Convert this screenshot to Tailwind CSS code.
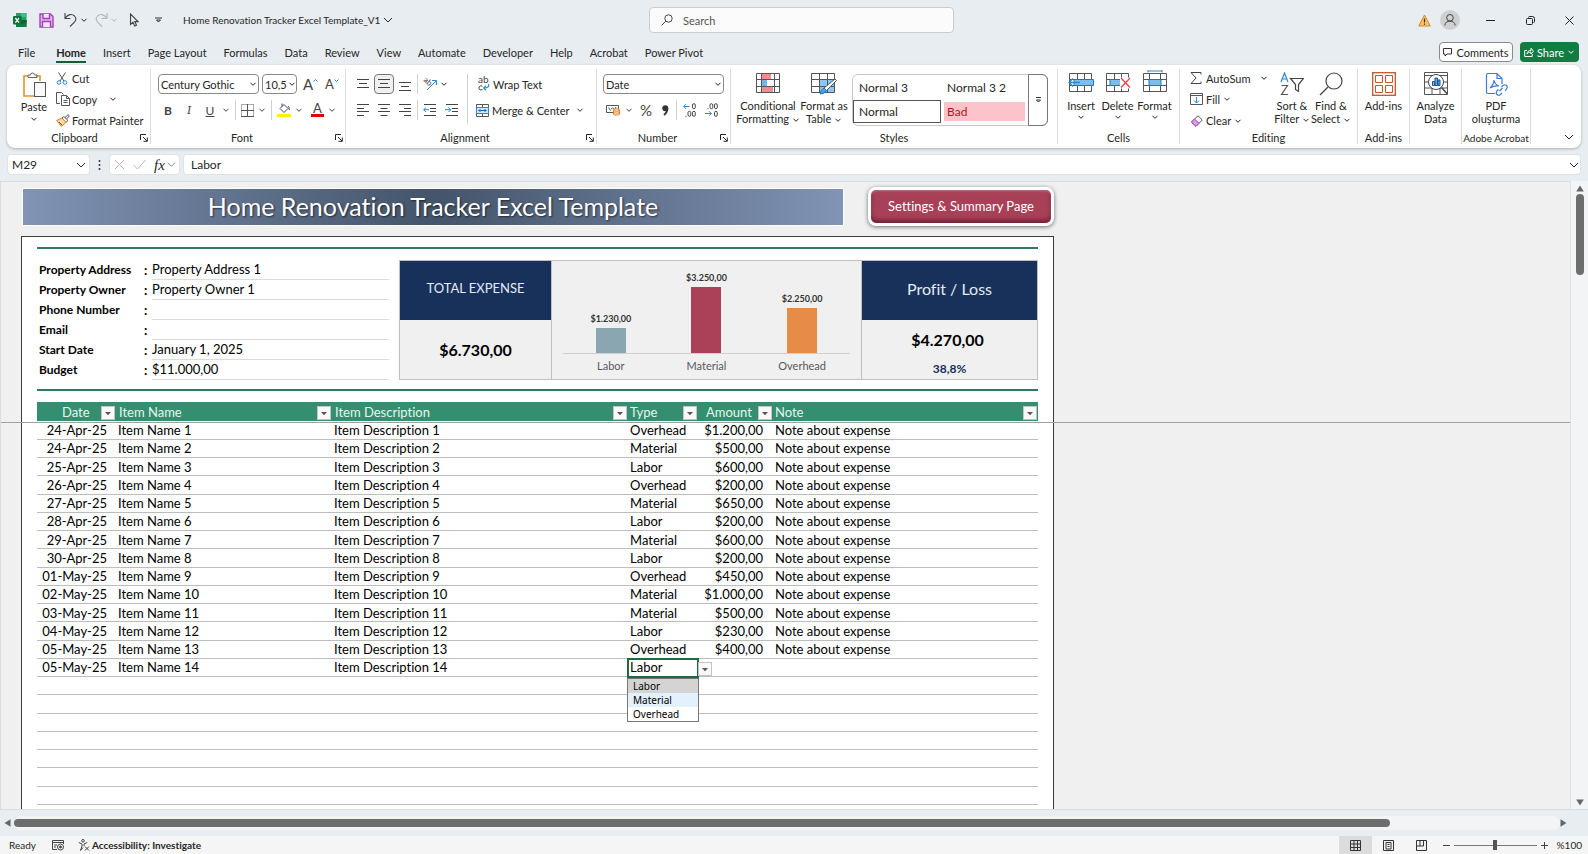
<!DOCTYPE html>
<html lang="en">
<head>
<meta charset="utf-8">
<title>Home Renovation Tracker Excel Template_V1</title>
<script src="https://cdn.jsdelivr.net/npm/@tailwindcss/browser@4"></script>
</head>
<body class="h-screen overflow-hidden flex flex-col bg-[#e8edf1] text-[#262626] text-[11px] leading-[13px] font-['Segoe_UI','Lato',sans-serif] [font-variant-ligatures:none]">
<svg class="hidden" aria-hidden="true">
  <symbol id="chev" viewBox="0 0 8 8"><path d="M1.500 2.800 4 5.300 6.500 2.800" fill="none" stroke="currentColor" stroke-width="1"/></symbol>
  <symbol id="chevl" viewBox="0 0 10 10"><path d="M1 3 5 7 9 3" fill="none" stroke="currentColor" stroke-width="1"/></symbol>
  <symbol id="launch" viewBox="0 0 8 8"><path d="M.5 6V.5H6M3 3l4 4M7.300 3.500V7.300H3.500" fill="none" stroke="currentColor" stroke-width="1"/></symbol>
  <symbol id="tri" viewBox="0 0 14 14"><rect x=".5" y=".5" width="13" height="13" fill="#f8f8f8" stroke="#c4c4c4"/><path d="M4 6h6L7 9.200z" fill="#555"/></symbol>
</svg>

<!-- Title bar -->
<header class="h-10 shrink-0 flex items-center pl-3 pr-3 relative">
  <svg class="w-4 h-4" viewBox="0 0 16 16"><path d="M4 1h10.500v14H4z" fill="#21a366"/><path d="M9 1h5.500v4H9z" fill="#33c481"/><path d="M4 8h10.500v7H4z" fill="#107c41"/><path d="M9 8h5.500v3.500H9z" fill="#185c37"/><rect x="1" y="4" width="8.500" height="8.500" rx="1" fill="#0f703b"/><path d="m3.400 6 3.600 4.600M7 6l-3.600 4.600" stroke="#fff" stroke-width="1.300"/></svg>
  <button aria-label="Save" class="ml-[11px]"><svg class="w-[15px] h-[15px]" viewBox="0 0 15 15" fill="none" stroke="#a33fb8" stroke-width="1.400"><path d="M1 1h10.500L14 3.500V14H1z" fill="#e4b5ee"/><path d="M4 1v4.500h6.500V1M3.500 14V8.500h8V14" fill="#f6e6fa"/></svg></button>
  <button aria-label="Undo" class="ml-[9px]"><svg class="w-[15px] h-4" viewBox="0 0 15 16" fill="none" stroke="#444" stroke-width="1.100"><path d="M2 1v5.500h5.500M2 6.300C5 2 9 1.500 11.500 4c2 2.300 1.500 4.600-.3 6.300L7 14.500"/></svg></button>
  <svg class="w-2 h-2 ml-[2px]"><use href="#chev"/></svg>
  <button aria-label="Redo" class="ml-[6px] text-[#b4b8bb]"><svg class="w-[15px] h-4" viewBox="0 0 15 16" fill="none" stroke="currentColor" stroke-width="1.100"><path d="M13 1v5.500H7.500M13 6.300C10 2 6 1.500 3.500 4c-2 2.300-1.500 4.600.3 6.300L8 14.500"/></svg></button>
  <svg class="w-2 h-2 ml-px text-[#b4b8bb]"><use href="#chev"/></svg>
  <svg class="w-[10px] h-[14px] ml-[11px]" viewBox="0 0 10 14"><path d="M1.500 1v10.500L4 9.200l1.700 3.900 1.800-.8-1.700-3.700H9z" fill="none" stroke="#444" stroke-width="1.100"/></svg>
  <svg class="w-[7px] h-[7px] ml-4" viewBox="0 0 7 7" fill="none" stroke="#333"><path d="M0 1h7M1.500 3h4L3.500 5z"/></svg>
  <h1 class="ml-[21px] text-[10px] whitespace-nowrap">Home Renovation Tracker Excel Template_V1</h1>
  <svg class="w-[10px] h-[10px] ml-[3px]"><use href="#chevl"/></svg>
  <label class="absolute left-1/2 -translate-x-[145px] top-[7px] w-[305px] h-[26px] bg-[#fbfbfc] border border-[#c9cdd0] rounded flex items-center pl-[11px] gap-[10px]">
    <svg class="w-3 h-3" viewBox="0 0 12 12" fill="none" stroke="#444"><circle cx="7.500" cy="4.500" r="3.700"/><path d="M4.800 7.200.6 11.400"/></svg>
    <input type="text" placeholder="Search" aria-label="Search" class="w-56 outline-none text-[11px] placeholder:text-[#555]">
  </label>
  <div class="ml-auto flex items-center">
    <svg class="w-[13px] h-[13px]" viewBox="0 0 13 13"><path d="M6.500 1 12.300 12H.7z" fill="#fbc35f" stroke="#d9862a"/><path d="M6.500 4.500v4M6.500 9.500v1.300" stroke="#333" stroke-width="1.200"/></svg>
    <button aria-label="Account" class="ml-[9px]"><svg class="w-5 h-5" viewBox="0 0 20 20" fill="none" stroke="#444"><circle cx="10" cy="10" r="10" fill="#cdcfd1" stroke="none"/><circle cx="10" cy="7.800" r="3.300"/><path d="M4.800 15.500c.4-3 2.300-4.400 5.200-4.400s4.800 1.400 5.200 4.400"/></svg></button>
    <button aria-label="Minimize" class="ml-[26px]"><svg class="w-[9px] h-[9px]" viewBox="0 0 9 9" stroke="#222"><path d="M0 4.500h9"/></svg></button>
    <button aria-label="Restore" class="ml-[31px]"><svg class="w-[9px] h-[9px]" viewBox="0 0 9 9" fill="none" stroke="#222"><rect x=".5" y="2.500" width="6" height="6" rx="1"/><path d="M2.500 1.500q0-1 1-1h3q2 0 2 2v3q0 1-1 1"/></svg></button>
    <button aria-label="Close" class="ml-[30px] mr-[2px]"><svg class="w-[9px] h-[9px]" viewBox="0 0 9 9" stroke="#222"><path d="m.5.500 8 8M8.500.5l-8 8"/></svg></button>
  </div>
</header>

<!-- Tabs -->
<nav class="h-[25px] shrink-0 flex items-start pt-1 pl-[18px] pr-[9px] text-[11px] leading-[17px]">
  <div class="flex gap-[17px] whitespace-nowrap">
    <a href="#" class="mr-1">File</a><a href="#" class="font-bold border-b-2 border-[#185c37]">Home</a><a href="#">Insert</a><a href="#">Page Layout</a><a href="#">Formulas</a><a href="#">Data</a><a href="#">Review</a><a href="#">View</a><a href="#">Automate</a><a href="#">Developer</a><a href="#">Help</a><a href="#">Acrobat</a><a href="#">Power Pivot</a>
  </div>
  <div class="ml-auto -mt-[2px] flex gap-[7px]">
    <button class="w-[74px] h-5 bg-white border border-[#8a8a8a] rounded flex items-center justify-center gap-1"><svg class="w-[9px] h-[9px]" viewBox="0 0 9 9" fill="none" stroke="#333"><path d="M.5.500h8v5.500H4L2 8V6H.5z"/></svg><span>Comments</span></button>
    <button class="w-[59px] h-5 bg-[#107c41] text-white rounded flex items-center justify-center gap-[3px]"><svg class="w-[10px] h-[10px]" viewBox="0 0 10 10" fill="none" stroke="#fff"><path d="M3 3.500H.7v6h7.500V7M3 7c.3-2.500 1.500-3.500 4-3.500V1.200l2.500 3L7 7V5.200C5 5.200 4 5.600 3 7z"/></svg>Share<svg class="w-2 h-2"><use href="#chev"/></svg></button>
  </div>
</nav>

<!-- Ribbon -->
<section aria-label="Ribbon" class="mx-[7px] h-[83px] shrink-0 bg-white rounded-lg shadow-[0_1px_3px_rgba(0,0,0,0.25)] py-1 flex whitespace-nowrap">
  <div class="w-[144px] flex flex-col border-r border-[#dcdcdc]">
    <div class="h-16 flex pl-[10px]">
      <button class="w-[34px] flex flex-col items-center pt-[3px]">
        <svg class="w-[25px] h-[26px]" viewBox="0 0 25 26" fill="none"><path d="M6 4H2v20h10M14 4h4v5" stroke="#e8912d" stroke-width="1.600"/><path d="M6 5.500V3h2.500a2 2 0 0 1 4 0H15v2.500z" stroke="#666"/><rect x="12.500" y="10.500" width="11" height="14" stroke="#555" fill="#fafafa"/></svg>
        <span class="mt-[2px]">Paste</span><svg class="w-2 h-2 mt-[2px]"><use href="#chev"/></svg>
      </button>
      <div class="flex flex-col ml-[5px] h-[62px]">
        <button class="h-[18px] flex items-center gap-1"><svg class="w-3 h-[13px]" viewBox="0 0 12 13" fill="none"><path d="M2.500.5 8 9M9.500.5 4 9" stroke="#555"/><circle cx="3" cy="10.500" r="1.800" stroke="#2b88c9"/><circle cx="9" cy="10.500" r="1.800" stroke="#2b88c9"/></svg>Cut</button>
        <button class="h-[24px] flex items-center gap-[2px]"><svg class="w-[14px] h-[14px]" viewBox="0 0 14 14" fill="none" stroke="#555"><path d="M4 11.500H.5V.5h5l2 2"/><path d="M5.500 3.500h5l3 3v7h-8zM10.500 3.500v3h3M7.500 8.500h4M7.500 10.500h4"/></svg>Copy<svg class="w-2 h-2 ml-[10px]"><use href="#chev"/></svg></button>
        <button class="h-[19px] flex items-center gap-[2px]"><svg class="w-[14px] h-[13px]" viewBox="0 0 14 13" fill="none"><path d="M.7 6.500 6 4l4 4.300-4.500 4.200z" fill="#fbd9a8" stroke="#e07b1a"/><path d="M3 8l3 3M6 4l1.800-1.500 4.200 4L10 8.300M9 3.500 12 .7l1.300 1.200-2.500 3" stroke="#555"/></svg>Format Painter</button>
      </div>
    </div>
    <div class="relative text-center leading-[12px] pr-2">Clipboard<button aria-label="Clipboard settings" class="absolute right-[2px] top-[2px]"><svg class="w-2 h-2"><use href="#launch"/></svg></button></div>
  </div>

  <div class="w-[195px] flex flex-col border-r border-[#dcdcdc]">
    <div class="h-16 flex flex-col gap-[6px] pt-[5px] pl-[7px]">
      <div class="flex h-5 items-center">
        <div class="relative"><select aria-label="Font" class="appearance-none w-[101px] h-5 border border-[#8a8a8a] rounded pl-[2px]"><option>Century Gothic</option></select><svg class="w-2 h-2 absolute right-[2px] top-[6px] pointer-events-none"><use href="#chev"/></svg></div>
        <div class="relative ml-[3px]"><select aria-label="Font size" class="appearance-none w-[35px] h-5 border border-[#8a8a8a] rounded pl-[2px]"><option>10,5</option></select><svg class="w-2 h-2 absolute right-px top-[6px] pointer-events-none"><use href="#chev"/></svg></div>
        <button class="ml-[6px] w-[14px] text-[15px] flex items-start text-[#444]" aria-label="Increase font size">A<svg class="w-[5px] h-[5px] shrink-0" viewBox="0 0 5 5" fill="none" stroke="#2b88c9"><path d="M.5 3.500l2-2 2 2"/></svg></button>
        <button class="ml-[8px] w-[14px] text-[13px] flex items-start text-[#444]" aria-label="Decrease font size">A<svg class="w-[5px] h-[5px] shrink-0" viewBox="0 0 5 5" fill="none" stroke="#2b88c9"><path d="M.5 1.500l2 2 2-2"/></svg></button>
      </div>
      <div class="flex h-5 items-center text-[#444]">
        <button class="w-5 font-bold text-[12px]">B</button><button class="w-[22px] italic text-[12px] font-serif">I</button><button class="w-5 underline text-[12px]">U</button><svg class="w-2 h-2 ml-[2px]"><use href="#chev"/></svg>
        <span class="w-px h-5 bg-[#d0d0d0] ml-[5px] mr-[5px]"></span>
        <button aria-label="Borders"><svg class="w-[13px] h-[13px]" viewBox="0 0 13 13" fill="none" stroke="#555"><path d="M.5.500h12v12H.5z" stroke-dasharray="1 1"/><path d="M6.500 0v13M0 6.500h13M0 12.500h13"/></svg></button><svg class="w-2 h-2 ml-1"><use href="#chev"/></svg>
        <span class="w-px h-5 bg-[#d0d0d0] ml-[5px] mr-[5px]"></span>
        <button aria-label="Fill color"><svg class="w-[14px] h-[14px]" viewBox="0 0 14 14" fill="none"><path d="m3 5.500 4-4 4 4-4 4zM5 3.500V.5M11 3q1.500 1 1.200 4" stroke="#446"/><path d="M0 11h14v3H0z" fill="#fff200"/></svg></button><svg class="w-2 h-2 ml-1"><use href="#chev"/></svg>
        <button aria-label="Font color" class="ml-2 w-[13px] h-[14px] text-[13px] leading-[11px] border-b-3 border-[#e00000]">A</button><svg class="w-2 h-2 ml-1"><use href="#chev"/></svg>
      </div>
    </div>
    <div class="relative text-center leading-[12px] pr-3">Font<button aria-label="Font settings" class="absolute right-[2px] top-[2px]"><svg class="w-2 h-2"><use href="#launch"/></svg></button></div>
  </div>

  <div class="w-[251px] flex flex-col border-r border-[#dcdcdc]">
    <div class="h-16 flex pt-[5px] pl-[6px]">
      <div class="flex flex-col gap-[6px]">
        <div class="flex h-5 items-center">
          <button aria-label="Top align" class="w-[22px] flex justify-center"><svg class="w-3 h-[13px]" viewBox="0 0 12 13" stroke="#444"><path d="M0 1.500h12M2 5.500h8M0 9.500h12"/></svg></button>
          <button aria-label="Middle align" class="w-5 h-5 border border-[#777] rounded bg-[#f0f0f0] flex items-center justify-center"><svg class="w-3 h-3" viewBox="0 0 12 12" stroke="#444"><path d="M0 1.500h12M2 5.500h8M0 9.500h12"/></svg></button>
          <button aria-label="Bottom align" class="w-[22px] flex justify-center"><svg class="w-3 h-[13px]" viewBox="0 0 12 13" stroke="#444"><path d="M0 4.500h12M2 8.500h8M0 12.500h12"/></svg></button>
          <span class="w-px h-5 bg-[#d0d0d0] mr-[5px] ml-px"></span>
          <button aria-label="Orientation"><svg class="w-[14px] h-[14px] overflow-visible" viewBox="0 0 14 14" fill="none"><text x="0" y="6" font-size="8" fill="#444" transform="rotate(40 3 5)">ab</text><path d="M4 13 13 4M9 3.500h4.500V8" stroke="#2b88c9"/></svg></button><svg class="w-2 h-2 ml-[3px]"><use href="#chev"/></svg>
        </div>
        <div class="flex h-5 items-center">
          <button aria-label="Align left" class="w-[22px] flex justify-center"><svg class="w-3 h-3" viewBox="0 0 12 12" stroke="#444"><path d="M0 .5h12M0 4.500h7M0 7.500h12M0 11.500h7"/></svg></button>
          <button aria-label="Center" class="w-5 flex justify-center"><svg class="w-3 h-3" viewBox="0 0 12 12" stroke="#444"><path d="M0 .5h12M2.500 4.500h7M0 7.500h12M2.500 11.500h7"/></svg></button>
          <button aria-label="Align right" class="w-[22px] flex justify-center"><svg class="w-3 h-3" viewBox="0 0 12 12" stroke="#444"><path d="M0 .5h12M5 4.500h7M0 7.500h12M5 11.500h7"/></svg></button>
          <span class="w-px h-5 bg-[#d0d0d0] mr-[5px] ml-px"></span>
          <button aria-label="Decrease indent"><svg class="w-[13px] h-3" viewBox="0 0 13 12" fill="none" stroke="#444"><path d="M1 .5h12M7 4.500h6M7 7.500h6M1 11.500h12"/><path d="M6 5.700H.7M3 3.500.7 5.700 3 8" stroke="#2b88c9"/></svg></button>
          <button aria-label="Increase indent" class="ml-[9px]"><svg class="w-[13px] h-3" viewBox="0 0 13 12" fill="none" stroke="#444"><path d="M1 .5h12M7 4.500h6M7 7.500h6M1 11.500h12"/><path d="M0 5.700h5.500M3.500 3.500l2.300 2.200L3.500 8" stroke="#2b88c9"/></svg></button>
        </div>
      </div>
      <span class="w-px h-[50px] bg-[#d0d0d0] ml-[9px] mr-[8px]"></span>
      <div class="flex flex-col gap-[6px]">
        <button class="h-5 flex items-center gap-[3px] pl-[2px]"><svg class="w-3 h-[14px] overflow-visible" viewBox="0 0 12 14" fill="none"><text x="0" y="6" font-size="10" fill="#444">ab</text><path d="M4.500 9.300Q2.500 8 1.300 9.500.4 11.300 1.500 12.500q1.300 1 3 0" stroke="#444"/><path d="M10.500 7q1.300 4-4.500 4M8 8.700 5.700 11 8 13.200" stroke="#2b88c9" stroke-width="1.200"/></svg>Wrap Text</button>
        <button class="h-5 w-[108px] flex items-center gap-[3px]"><svg class="w-[13px] h-[13px]" viewBox="0 0 13 13" fill="none" stroke="#555"><path d="M.5.500h12v12H.5zM6.500 0v3M6.500 10v3"/><path d="M.5 3.500h12v6H.5z" fill="#cfe6f7" stroke="#2b88c9"/><path d="M2.500 6.500h8M4.500 5 3 6.500 4.500 8M8.500 5 10 6.500 8.500 8" stroke="#1b6fb0"/></svg>Merge &amp; Center<svg class="w-2 h-2 ml-auto"><use href="#chev"/></svg></button>
      </div>
    </div>
    <div class="relative text-center leading-[12px] pr-3">Alignment<button aria-label="Alignment settings" class="absolute right-[2px] top-[2px]"><svg class="w-2 h-2"><use href="#launch"/></svg></button></div>
  </div>

  <div class="w-[134px] flex flex-col border-r border-[#dcdcdc]">
    <div class="h-16 flex flex-col gap-[6px] pt-[5px] pl-[6px]">
      <div class="relative w-[121px]"><select aria-label="Number format" class="block appearance-none w-full h-5 border border-[#8a8a8a] rounded pl-[2px]"><option>Date</option></select><svg class="w-2 h-2 absolute right-[2px] top-[6px] pointer-events-none"><use href="#chev"/></svg></div>
      <div class="flex h-5 items-center text-[#444]">
        <button aria-label="Accounting format" class="ml-[3px]"><svg class="w-[14px] h-3" viewBox="0 0 14 12" fill="none"><path d="M.5 1.500h12v7H.5z" stroke="#555"/><path d="M2.500 3.500l2 3M5 5q1.500-2 3 0M10 3l-1 2" stroke="#555"/><path d="M7.500 6v4c0 1.500 6 1.500 6 0V6" fill="#fff0dc" stroke="#e07b1a"/><ellipse cx="10.500" cy="6" rx="3" ry="1.200" fill="#fff0dc" stroke="#e07b1a"/><path d="M7.500 8.200c0 1.300 6 1.300 6 0" stroke="#e07b1a"/></svg></button><svg class="w-2 h-2 ml-[5px]"><use href="#chev"/></svg>
        <button class="ml-[6px] text-[15px] w-[14px]">%</button>
        <button aria-label="Comma style" class="ml-[9px]"><svg class="w-[7px] h-[11px]" viewBox="0 0 7 11"><circle cx="3.300" cy="3.300" r="3" fill="#333"/><path d="M5.300 3q.5 4-3.300 7" stroke="#333" stroke-width="1.800" fill="none"/></svg></button>
        <span class="w-px h-5 bg-[#d0d0d0] ml-[7px] mr-[6px]"></span>
        <button aria-label="Increase decimal"><svg class="w-[13px] h-[14px]" viewBox="0 0 13 14" fill="none" stroke="#444"><path d="M6.500 3.500H.7M3 1.200.7 3.500 3 5.800" stroke="#2b88c9"/><rect x="9.500" y=".7" width="2.800" height="5" rx="1.400"/><rect x="5" y="8.300" width="2.800" height="5" rx="1.400"/><rect x="9.500" y="8.300" width="2.800" height="5" rx="1.400"/><path d="M2.500 13.300h1"/></svg></button>
        <button aria-label="Decrease decimal" class="ml-[9px]"><svg class="w-[13px] h-[14px]" viewBox="0 0 13 14" fill="none" stroke="#444"><rect x="5" y=".7" width="2.800" height="5" rx="1.400"/><rect x="9.500" y=".7" width="2.800" height="5" rx="1.400"/><path d="M2.500 5.700h1"/><path d="M0 10.500h6.500M4 8.200l2.300 2.300L4 12.800" stroke="#2b88c9"/><rect x="9.500" y="8.300" width="2.800" height="5" rx="1.400"/></svg></button>
      </div>
    </div>
    <div class="relative text-center leading-[12px] pr-3">Number<button aria-label="Number settings" class="absolute right-[2px] top-[2px]"><svg class="w-2 h-2"><use href="#launch"/></svg></button></div>
  </div>

  <div class="w-[327px] flex flex-col border-r border-[#dcdcdc]">
    <div class="h-16 flex pl-[6px]">
      <button class="w-[62px] flex flex-col items-center pt-[4px]"><svg class="w-6 h-5" viewBox="0 0 24 20"><path d="M.5.500h23v19H.5z" fill="#fff"/><path d="M5 .5h10v6H5z" fill="#f98a92"/><path d="M5 6.500h6v7H5z" fill="#6fb8ea"/><path d="M5 13.500h12v6H5z" fill="#f98a92"/><path d="M.5.500h23v19H.5zM.5 6.500h23M.5 13.500h23M5.500 .5v19M18.500 .5v19" fill="none" stroke="#555"/></svg><span class="mt-[6px] text-center">Conditional<br>Formatting <svg class="inline w-2 h-2"><use href="#chev"/></svg></span></button>
      <button class="w-[50px] flex flex-col items-center pt-[4px]"><svg class="w-[26px] h-[22px]" viewBox="0 0 26 22"><path d="M.5.500h23v19H.5z" fill="#fff"/><path d="M8 6.500h15.500v13H8z" fill="#8cc6f1"/><path d="M.5.500h23v19H.5zM.5 6.500h23M.5 13.500h23M8.500 .5v19M16.500 .5v19" fill="none" stroke="#555"/><path d="m24 6 1.500 1.500-10 10-2.500-2.500z" fill="#fff" stroke="#555"/><path d="M13 15q-3 1-4 6 5 0 6.500-3.500z" fill="#4ba3e3" stroke="#2277b8"/></svg><span class="mt-1 text-center">Format as<br>Table <svg class="inline w-2 h-2"><use href="#chev"/></svg></span></button>
      <div class="ml-[3px] mt-[5px] w-[196px] h-[52px] border border-[#c8c8c8] rounded-md flex">
        <div class="flex-1 grid grid-cols-[88px_1fr] grid-rows-2 text-[12px] text-left">
          <button class="text-left pl-[6px]">Normal 3</button><button class="text-left pl-[6px]">Normal 3 2</button>
          <button class="text-left pl-[5px] border border-[#555] mb-[2px]">Normal</button><button class="text-left pl-[3px] bg-[#fdc3ca] text-[#b5121b] ml-[3px] mr-1 mt-[2px] mb-1">Bad</button>
        </div>
        <button aria-label="More styles" class="w-5 -m-px border border-[#777] rounded-r-md flex items-center justify-center"><svg class="w-[7px] h-[7px]" viewBox="0 0 7 7" fill="none" stroke="#333"><path d="M1 .500h5M1.500 3h4L3.500 5z"/></svg></button>
      </div>
    </div>
    <div class="text-center leading-[12px]">Styles</div>
  </div>

  <div class="w-[122px] flex flex-col border-r border-[#dcdcdc]">
    <div class="h-16 flex pl-[5px]">
      <button class="w-9 flex flex-col items-center pt-[4px]"><svg class="w-[26px] h-5" viewBox="0 0 26 20"><path d="M1.500.5h22v18h-22zM1.500 6.500h22M1.500 12.500h22M9.500 .5v18M16.500 .5v18" fill="none" stroke="#555"/><path d="M6 6.500h19.500v6H6z" fill="#7dbdec" stroke="#2277b8"/><path d="M12 9.500H1M5 5.500l-4 4 4 4" fill="none" stroke="#2b88c9" stroke-width="1.300"/></svg><span class="mt-[6px]">Insert</span><svg class="w-2 h-2 mt-px"><use href="#chev"/></svg></button>
      <button class="w-[37px] flex flex-col items-center pt-[4px]"><svg class="w-[26px] h-5" viewBox="0 0 26 20"><path d="M1.500.5h22v18h-22zM1.500 6.500h22M1.500 12.500h22M9.500 .5v18M16.500 .5v18" fill="none" stroke="#555"/><path d="M5 6.500h11v6H5z" fill="#7dbdec" stroke="#2277b8"/><path d="M15 4.500h10v11H15z" fill="#fff"/><path d="m16 5 9 9.500M25 5l-9 9.500" fill="none" stroke="#e8434e" stroke-width="1.300"/></svg><span class="mt-[6px]">Delete</span><svg class="w-2 h-2 mt-px"><use href="#chev"/></svg></button>
      <button class="w-[37px] flex flex-col items-center pt-px"><svg class="w-[26px] h-[23px]" viewBox="0 0 26 23"><path d="M1.500 3.500h23v18h-23zM1.500 9.500h23M1.500 15.500h23M7.500 3.500v18M18.500 3.500v18" fill="none" stroke="#555"/><path d="M7 9.500h12v6H7z" fill="#7dbdec" stroke="#2277b8"/><path d="M6 1h14M6 0v2.500M20 0v2.500" stroke="#2b88c9"/></svg><span class="mt-[6px]">Format</span><svg class="w-2 h-2 mt-px"><use href="#chev"/></svg></button>
    </div>
    <div class="text-center leading-[12px]">Cells</div>
  </div>

  <div class="w-[178px] flex flex-col border-r border-[#dcdcdc]">
    <div class="h-16 flex pl-[10px]">
      <div class="w-[78px] flex flex-col h-[62px]">
        <button class="h-[18px] flex items-center gap-1"><svg class="w-3 h-3" viewBox="0 0 12 12" fill="none" stroke="#444"><path d="M11 2.500V.5H1L6 6l-5 5.500h10v-2"/></svg>AutoSum<svg class="w-2 h-2 ml-auto"><use href="#chev"/></svg></button>
        <button class="h-[24px] flex items-center gap-[3px]"><svg class="w-[13px] h-3" viewBox="0 0 13 12" fill="none" stroke="#555"><path d="M.5.500h12v11H.5zM.5 2.500h12"/><path d="M6.500 4v6M4 7.500l2.500 2.500L9 7.500" stroke="#2b88c9"/></svg>Fill<svg class="w-2 h-2"><use href="#chev"/></svg></button>
        <button class="h-[19px] flex items-center gap-[3px]"><svg class="w-[13px] h-3" viewBox="0 0 13 12" fill="none"><path d="M8 .8 12.300 5 6 11.300 1.500 7z" stroke="#555" fill="#fff"/><path d="M4.500 4 9 8.300l-3 3L1.500 7z" fill="#d9a0e6" stroke="#a33fb8"/></svg>Clear<svg class="w-2 h-2"><use href="#chev"/></svg></button>
      </div>
      <button class="ml-[3px] w-[42px] flex flex-col items-center pt-[3px]"><svg class="w-6 h-6" viewBox="0 0 24 24" fill="none"><path d="M1 10 4.500 1 8 10M2.200 7h4.600" stroke="#2b88c9" stroke-width="1.200"/><path d="M1.500 13.500H7.500L1.500 22.500H8" stroke="#555" stroke-width="1.200"/><path d="M10.500 6.500h13l-5 6v7l-3-2v-5z" stroke="#444" stroke-width="1.200"/></svg><span class="mt-[3px] text-center">Sort &amp;<br>Filter <svg class="inline w-2 h-2"><use href="#chev"/></svg></span></button>
      <button class="w-9 flex flex-col items-center pt-[3px]"><svg class="w-6 h-6" viewBox="0 0 24 24" fill="none" stroke="#444" stroke-width="1.200"><circle cx="15" cy="9" r="8"/><path d="M9 15 1 23"/></svg><span class="mt-[3px] text-center">Find &amp;<br>Select <svg class="inline w-2 h-2"><use href="#chev"/></svg></span></button>
    </div>
    <div class="text-center leading-[12px]">Editing</div>
  </div>

  <div class="w-[52px] flex flex-col border-r border-[#dcdcdc]">
    <button class="h-16 flex flex-col items-center pt-[3px]"><svg class="w-6 h-6" viewBox="0 0 24 24" fill="none" stroke="#c4562c"><rect x=".7" y=".7" width="22.600" height="22.600" stroke-width="1.300"/><path d="M3.500 3.500h7v7h-7zM13.500 3.500h7v7h-7zM3.500 13.500h7v7h-7zM13.500 13.500h7v7h-7z"/></svg><span class="mt-[3px]">Add-ins</span></button>
    <div class="text-center leading-[12px]">Add-ins</div>
  </div>
  <div class="w-[52px] flex flex-col border-r border-[#dcdcdc]">
    <button class="h-16 flex flex-col items-center pt-[3px]"><svg class="w-6 h-6" viewBox="0 0 24 24" fill="none" stroke="#555"><path d="M.5.500h23v22H.5zM.5 3.500h23M.5 10h23M.5 16h23M8 16v6.500M16 16v6.500"/><circle cx="12" cy="10" r="7.500" fill="#fff" stroke="#444"/><path d="m17.500 15.500 6 6.500" stroke="#444" stroke-width="1.500"/><path d="M8.500 9.500h2v4h-2z" fill="#9bd" stroke="#258"/><path d="M11 6h2.500v7.500H11zM14 8h2v5.500h-2z" fill="#5ae" stroke="#258"/></svg><span class="mt-[3px] text-center">Analyze<br>Data</span></button>
  </div>
  <div class="w-[69px] flex flex-col border-r border-[#dcdcdc]">
    <button class="h-16 flex flex-col items-center pt-[3px]"><svg class="w-6 h-6" viewBox="0 0 24 24" fill="none" stroke="#3b7bd4" stroke-width="1.200"><path d="M11 21.500H4q-1.500 0-1.500-1.500V3q0-1.500 1.500-1.500h9l5 5V12M13 1.500v5h5"/><path d="M6 16q4-4 4-8 1 5 5 6-5-.5-9 2z"/><path d="m14 18 3-3M13 16.500l-1.500 1.500q-1.500 2 0 3.500t3.500 0l1.500-1.500M16 14l1.500-1.500q2-1.500 3.500 0t0 3.500L19.500 18" transform="translate(1.500 1)"/></svg><span class="mt-[3px] text-center">PDF<br>oluşturma</span></button>
    <div class="text-center leading-[12px] text-[10px]">Adobe Acrobat</div>
  </div>
  <div class="flex-1 flex items-end justify-end pr-[7px] pb-[2px]"><button aria-label="Collapse ribbon"><svg class="w-[10px] h-[10px]"><use href="#chevl"/></svg></button></div>
</section>

<!-- Formula bar -->
<section aria-label="Formula bar" class="h-[33px] shrink-0 flex items-center px-[7px] text-[12px]">
  <div class="w-[83px] h-[21px] bg-white rounded border border-[#dfe3e6] flex items-center pl-1 pr-[3px]"><input aria-label="Name box" value="M29" class="w-full min-w-0 outline-none"><svg class="w-[10px] h-[10px] shrink-0"><use href="#chevl"/></svg></div>
  <svg class="w-[3px] h-3 mx-[8px]" viewBox="0 0 3 12" fill="#333"><circle cx="1.500" cy="2" r="1"/><circle cx="1.500" cy="6" r="1"/><circle cx="1.500" cy="10" r="1"/></svg>
  <div class="w-[71px] h-[21px] bg-white rounded border border-[#dfe3e6] flex items-center pl-1 gap-2">
    <button aria-label="Cancel"><svg class="w-[11px] h-[11px]" viewBox="0 0 11 11" stroke="#b8b8b8" fill="none"><path d="m1 1 9 9M10 1l-9 9"/></svg></button>
    <button aria-label="Enter"><svg class="w-[13px] h-[11px]" viewBox="0 0 13 11" stroke="#b8b8b8" fill="none"><path d="m.5 6 4 4L12.500 1"/></svg></button>
    <button class="font-['Liberation_Serif',serif] italic text-[15px] leading-4 flex items-center">fx<svg class="w-[9px] h-[9px] ml-[2px] text-[#777]"><use href="#chevl"/></svg></button>
  </div>
  <div class="flex-1 ml-[3px] h-[21px] bg-white rounded border border-[#dfe3e6] flex items-center pl-[7px] pr-px"><input aria-label="Formula" value="Labor" class="flex-1 outline-none"><svg class="w-[10px] h-[10px]"><use href="#chevl"/></svg></div>
</section>

<!-- Worksheet -->
<main class="flex-1 min-h-0 flex font-['Century_Gothic','Lato',sans-serif]">
  <div class="flex-1 relative overflow-hidden bg-[#f0f0f0] border-t border-l border-[#d9dde0] pl-5 pt-[7px] text-black">
    <div class="flex items-start ml-[2px]">
      <h2 class="w-[820px] h-9 flex items-center justify-center text-[25px] leading-6 pb-[2px] text-white bg-linear-to-r from-[#8194b5] via-[#44546a] to-[#8194b5] shadow-[0_0_0_1px_#fff] [text-shadow:1px_1px_2px_rgba(0,0,0,0.6)]">Home Renovation Tracker Excel Template</h2>
      <button class="ml-[25px] -mt-[2px] w-[186px] h-[39px] rounded-lg border-3 border-white bg-[#a84058] text-white text-[13px] shadow-[0_1px_4px_rgba(0,0,0,0.55)]"><span class="flex items-center justify-center size-full rounded-md shadow-[inset_0_-3px_4px_rgba(80,10,30,0.6),inset_0_1px_2px_rgba(255,255,255,0.3)]">Settings &amp; Summary Page</span></button>
    </div>
    <div class="w-[1033px] h-[640px] mt-[10px] bg-white border border-[#3c3c3c] px-[15px] pt-[10px]">
      <div class="border-t-2 border-b-2 border-[#33776a] h-[144px] flex pt-[11px]">
        <dl class="w-[352px] grid grid-cols-[105px_8px_1fr] auto-rows-[20px] text-[13px] leading-5 pl-[2px]">
          <dt class="font-bold text-[12px]">Property Address</dt><dd class="font-bold">:</dd><dd class="border-b border-[#dcdcdc] leading-[18px]">Property Address 1</dd>
          <dt class="font-bold text-[12px]">Property Owner</dt><dd class="font-bold">:</dd><dd class="border-b border-[#dcdcdc] leading-[18px]">Property Owner 1</dd>
          <dt class="font-bold text-[12px]">Phone Number</dt><dd class="font-bold">:</dd><dd class="border-b border-[#dcdcdc]"></dd>
          <dt class="font-bold text-[12px]">Email</dt><dd class="font-bold">:</dd><dd class="border-b border-[#dcdcdc]"></dd>
          <dt class="font-bold text-[12px]">Start Date</dt><dd class="font-bold">:</dd><dd class="border-b border-[#dcdcdc] leading-[18px]">January 1, 2025</dd>
          <dt class="font-bold text-[12px]">Budget</dt><dd class="font-bold">:</dd><dd class="border-b border-[#dcdcdc] leading-[18px]">$11.000,00</dd>
        </dl>
        <div class="ml-[10px] flex-1 h-[120px] border border-[#c0c0c0] bg-[#f0f0f0] flex text-center">
          <div class="w-[152px] border-r border-[#c0c0c0]"><h3 class="h-[59px] pb-1 bg-[#17315b] text-[#e4eaf4] flex items-center justify-center text-[13px]">TOTAL EXPENSE</h3><p class="h-[59px] flex items-center justify-center font-bold text-[16px]">$6.730,00</p></div>
          <div class="w-[310px] border-r border-[#c0c0c0] px-[11px] flex flex-col">
            <div class="h-[93px] border-b border-[#d0d0d0] grid grid-cols-3 items-end text-[9px] font-bold text-[#333]">
              <div class="flex flex-col items-center gap-[3px]">$1.230,00<div class="w-[30px] bg-[#89a6b1]" style="height:25px"></div></div>
              <div class="flex flex-col items-center gap-[3px]">$3.250,00<div class="w-[30px] bg-[#ab4159]" style="height:66px"></div></div>
              <div class="flex flex-col items-center gap-[3px]">$2.250,00<div class="w-[30px] bg-[#e68c47]" style="height:45px"></div></div>
            </div>
            <div class="grid grid-cols-3 pt-[5px] text-[11px] text-[#595959]"><span>Labor</span><span>Material</span><span>Overhead</span></div>
          </div>
          <div class="flex-1"><h3 class="h-[59px] pb-1 bg-[#17315b] text-[#e4eaf4] flex items-center justify-center text-[16px]">Profit / Loss</h3><p class="h-[38px] pr-1 flex items-center justify-center font-bold text-[16px]">$4.270,00</p><p class="h-5 flex items-center justify-center font-bold text-[12px] text-[#17315b]">38,8%</p></div>
        </div>
      </div>
      <table class="mt-[11px] w-full h-[403px] table-fixed border-collapse text-[13px] leading-4">
        <colgroup><col class="w-[79px]"><col class="w-[216px]"><col class="w-[296px]"><col class="w-[70px]"><col class="w-[75px]"><col></colgroup>
        <thead><tr class="bg-[#338f6f] text-[#e6f6ee] h-[19px] text-left" id="head"></tr></thead>
        <tbody id="rows"></tbody>
      </table>
    </div>
    <div class="absolute left-0 right-0 top-[240px] h-px bg-[#a0a0a0]"></div>
  </div>
  <div class="w-[18px] bg-[#f3f4f5] flex flex-col items-center pt-1 pb-[3px] border-l border-[#dfe3e8]">
    <svg class="w-2 h-[7px] shrink-0" viewBox="0 0 8 7"><path d="M4 .5 7.800 6.500H.2z" fill="#666"/></svg>
    <div class="w-2 h-[81px] mt-[2px] rounded-full bg-[#6b6e6c]"></div>
    <svg class="w-2 h-[7px] mt-auto" viewBox="0 0 8 7"><path d="M4 6.500 7.800.5H.2z" fill="#666"/></svg>
  </div>
</main>

<div class="h-[27px] shrink-0 flex items-center border-t border-[#d9dde0] pl-1 pr-[21px]">
  <svg class="w-[7px] h-2" viewBox="0 0 7 8"><path d="M.5 4 6.500.2v7.600z" fill="#666"/></svg>
  <div class="flex-1 ml-[3px] h-[14px] rounded-full bg-[#f3f4f5] flex items-center"><div class="w-[89%] h-2 rounded-full bg-[#6b6e6c]"></div></div>
  <svg class="w-[7px] h-2" viewBox="0 0 7 8"><path d="M6.500 4 .5.200v7.600z" fill="#666"/></svg>
</div>

<!-- Status bar -->
<footer class="h-[18px] shrink-0 bg-[#f5f5f5] flex items-center pl-[9px] pr-[6px] text-[10px]">
  <span>Ready</span>
  <svg class="w-3 h-3 ml-4" viewBox="0 0 12 12" fill="none" stroke="#444"><path d="M5 10.500H.5v-9h11V5M.5 3.500h11M2 6h3M2 8h2"/><circle cx="8.500" cy="8" r="3"/><circle cx="8.500" cy="8" r="1" fill="#444"/></svg>
  <svg class="w-3 h-3 ml-[14px]" viewBox="0 0 12 12" fill="none" stroke="#444"><circle cx="5" cy="1.800" r="1.300"/><path d="M.8 3.500 4 5v2l-1.500 4.500L5 8.500M9.200 3.500 6 5v2M7 7.500l4 4M11 7.500l-4 4"/></svg>
  <span class="ml-[2px] font-bold">Accessibility: Investigate</span>
  <div class="ml-auto flex items-center h-full">
    <button aria-label="Normal view" class="w-[33px] h-full bg-[#dcdcdc] flex items-center justify-center"><svg class="w-[11px] h-[11px]" viewBox="0 0 11 11" fill="none" stroke="#333"><path d="M.5.500h10v10H.5zM4 .5v10M7.500.5v10M.5 4h10M.5 7.500h10"/></svg></button>
    <button aria-label="Page layout view" class="w-[33px] flex justify-center"><svg class="w-[11px] h-[11px]" viewBox="0 0 11 11" fill="none" stroke="#333"><path d="M.5.500h10v10H.5zM3 2.500h5v6.500H3zM4.500 4.500h2M4.500 6.500h2"/></svg></button>
    <button aria-label="Page break view" class="w-[33px] flex justify-center"><svg class="w-[11px] h-[11px]" viewBox="0 0 11 11" fill="none" stroke="#333"><path d="M.5.500h10v10H.5zM4 .5V6M7.500.5V6M.5 6h7"/></svg></button>
    <button aria-label="Zoom out" class="ml-[5px]"><svg class="w-[7px] h-[7px]" viewBox="0 0 7 7" stroke="#444"><path d="M0 3.500h7"/></svg></button>
    <input type="range" aria-label="Zoom" min="0" max="100" value="50" class="appearance-none w-[83px] h-[10px] mx-1 bg-[linear-gradient(#777,#777)] bg-[length:100%_1px] bg-center bg-no-repeat [&::-webkit-slider-thumb]:appearance-none [&::-webkit-slider-thumb]:w-1 [&::-webkit-slider-thumb]:h-[10px] [&::-webkit-slider-thumb]:bg-[#555]">
    <button aria-label="Zoom in"><svg class="w-[7px] h-[7px]" viewBox="0 0 7 7" stroke="#444"><path d="M0 3.500h7M3.500 0v7"/></svg></button>
    <span class="ml-[9px]">%100</span>
  </div>
</footer>

<script>
const filter = '<button aria-label="Filter" class="absolute right-px bottom-px"><svg class="w-[14px] h-[14px] block"><use href="#tri"/></svg></button>';
const heads = [['Date','pl-[25px]'],['Item Name','pl-[3px]'],['Item Description','pl-[3px]'],['Type','pl-[2px]'],['Amount','pl-[8px]'],['Note','pl-[2px]']];
document.getElementById('head').innerHTML = heads.map(([t, c]) => `<th scope="col" class="relative font-normal p-0 ${c}">${t}${filter}</th>`).join('');
const data = [
  ['24-Apr-25','Overhead','$1.200,00'],['24-Apr-25','Material','$500,00'],['25-Apr-25','Labor','$600,00'],['26-Apr-25','Overhead','$200,00'],
  ['27-Apr-25','Material','$650,00'],['28-Apr-25','Labor','$200,00'],['29-Apr-25','Material','$600,00'],['30-Apr-25','Labor','$200,00'],
  ['01-May-25','Overhead','$450,00'],['02-May-25','Material','$1.000,00'],['03-May-25','Material','$500,00'],['04-May-25','Labor','$230,00'],
  ['05-May-25','Overhead','$400,00'],['05-May-25','Labor','']
];
const picker = `<div class="absolute -left-px -top-px -right-px h-[20px] border-2 border-[#1e6b41]"></div>
  <button aria-label="Open list" class="absolute left-full top-[3px]"><svg class="w-[14px] h-[14px] block"><use href="#tri"/></svg></button>
  <ul role="listbox" aria-label="Type" class="absolute -left-px top-[19px] -right-px z-10 bg-white border border-[#777] font-['Segoe_UI','Noto_Sans',sans-serif] text-[10px] leading-[14px]">
  <li role="option" aria-selected="true" class="pl-[5px] bg-[#d4d4d4]">Labor</li><li role="option" class="pl-[5px] bg-[#e2f1fc]">Material</li><li role="option" class="pl-[5px]">Overhead</li></ul>`;
let html = '';
for (let i = 0; i < 21; i++) {
  const r = data[i], n = i + 1;
  html += r
    ? `<tr class="h-[18px] border-b border-[#bdbdbd]"><td class="p-0 pr-[9px] text-right">${r[0]}</td><td class="p-0 pl-[2px]">Item Name ${n}</td><td class="p-0 pl-[2px]">Item Description ${n}</td><td class="p-0 pl-[2px] relative">${r[1]}${i === 13 ? picker : ''}</td><td class="p-0 pr-[10px] text-right">${r[2]}</td><td class="p-0 pl-[2px]">${i < 13 ? 'Note about expense' : ''}</td></tr>`
    : '<tr class="h-[18px] border-b border-[#bdbdbd]"><td class="p-0"></td><td class="p-0"></td><td class="p-0"></td><td class="p-0"></td><td class="p-0"></td><td class="p-0"></td></tr>';
}
document.getElementById('rows').innerHTML = html;
</script>
</body>
</html>
